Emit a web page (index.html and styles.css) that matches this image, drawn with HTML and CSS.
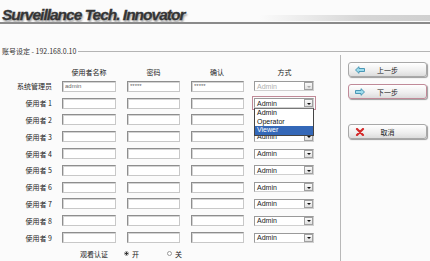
FILE: index.html
```html
<!DOCTYPE html>
<html>
<head>
<meta charset="utf-8">
<link rel="stylesheet" href="styles.css">
</head>
<body>
<div class="header">
  <span class="brand">Surveillance Tech. Innovator</span>
  <div class="shade"></div>
</div>
<div class="title-row">
  <span class="title">账号设定 - 192.168.0.10</span>
  <span class="title-line"></span>
</div>
<div class="main">
  <div class="left">
    <div class="grid">
      <div class="cell"></div>
      <div class="cell head">使用者名称</div>
      <div class="cell head">密码</div>
      <div class="cell head">确认</div>
      <div class="cell head sel-head">方式</div>

      <div class="cell label">系统管理员</div>
      <div class="cell"><input class="inp" value="admin"></div>
      <div class="cell"><input class="inp pw" value="*****"></div>
      <div class="cell"><input class="inp pw" value="*****"></div>
      <div class="cell"><div class="sel disabled"><span>Admin</span><i class="arr"></i></div></div>

      <div class="cell label">使用者 1</div>
      <div class="cell"><input class="inp"></div>
      <div class="cell"><input class="inp"></div>
      <div class="cell"><input class="inp"></div>
      <div class="cell"><div class="sel-wrap"><div class="sel focus"><span>Admin</span><i class="arr"></i></div>
        <ul class="drop"><li>Admin</li><li>Operator</li><li class="hl">Viewer</li></ul></div></div>

      <div class="cell label">使用者 2</div>
      <div class="cell"><input class="inp"></div>
      <div class="cell"><input class="inp"></div>
      <div class="cell"><input class="inp"></div>
      <div class="cell"><div class="sel covered"><span>Admin</span><i class="arr"></i></div></div>

      <div class="cell label">使用者 3</div>
      <div class="cell"><input class="inp"></div>
      <div class="cell"><input class="inp"></div>
      <div class="cell"><input class="inp"></div>
      <div class="cell"><div class="sel"><span>Admin</span><i class="arr"></i></div></div>

      <div class="cell label">使用者 4</div>
      <div class="cell"><input class="inp"></div>
      <div class="cell"><input class="inp"></div>
      <div class="cell"><input class="inp"></div>
      <div class="cell"><div class="sel"><span>Admin</span><i class="arr"></i></div></div>

      <div class="cell label">使用者 5</div>
      <div class="cell"><input class="inp"></div>
      <div class="cell"><input class="inp"></div>
      <div class="cell"><input class="inp"></div>
      <div class="cell"><div class="sel"><span>Admin</span><i class="arr"></i></div></div>

      <div class="cell label">使用者 6</div>
      <div class="cell"><input class="inp"></div>
      <div class="cell"><input class="inp"></div>
      <div class="cell"><input class="inp"></div>
      <div class="cell"><div class="sel"><span>Admin</span><i class="arr"></i></div></div>

      <div class="cell label">使用者 7</div>
      <div class="cell"><input class="inp"></div>
      <div class="cell"><input class="inp"></div>
      <div class="cell"><input class="inp"></div>
      <div class="cell"><div class="sel"><span>Admin</span><i class="arr"></i></div></div>

      <div class="cell label">使用者 8</div>
      <div class="cell"><input class="inp"></div>
      <div class="cell"><input class="inp"></div>
      <div class="cell"><input class="inp"></div>
      <div class="cell"><div class="sel"><span>Admin</span><i class="arr"></i></div></div>

      <div class="cell label">使用者 9</div>
      <div class="cell"><input class="inp"></div>
      <div class="cell"><input class="inp"></div>
      <div class="cell"><input class="inp"></div>
      <div class="cell"><div class="sel"><span>Admin</span><i class="arr"></i></div></div>
    </div>
    <div class="auth">
      <span class="auth-label">观看认证</span>
      <span class="radio on"></span><span class="opt">开</span>
      <span class="radio off"></span><span class="opt">关</span>
    </div>
  </div>
  <div class="right">
    <div class="btn">
      <svg class="ico" width="10" height="8" viewBox="0 0 10 8"><polygon points="0.5,4 4,0.7 4,2.5 9.5,2.5 9.5,5.5 4,5.5 4,7.3" fill="#9fdcec" stroke="#3d8fb0" stroke-width="0.9"/></svg>
      <span class="btn-text">上一步</span>
    </div>
    <div class="btn active">
      <svg class="ico" width="10" height="8" viewBox="0 0 10 8"><polygon points="9.5,4 6,0.7 6,2.5 0.5,2.5 0.5,5.5 6,5.5 6,7.3" fill="#9fdcec" stroke="#3d8fb0" stroke-width="0.9"/></svg>
      <span class="btn-text">下一步</span>
    </div>
    <div class="btn cancel">
      <svg class="ico" width="10" height="8" viewBox="0 0 10 8"><path d="M2,1 L8,7 M8,1 L2,7" stroke="#d42a2a" stroke-width="2.2" stroke-linecap="round"/></svg>
      <span class="btn-text">取消</span>
    </div>
  </div>
</div>
</body>
</html>
```

FILE: styles.css
```css
* { box-sizing: border-box; }
html, body {
  margin: 0;
  padding: 0;
  width: 430px;
  height: 261px;
  overflow: hidden;
  background: #fbfbfb;
  font-family: "Noto Sans CJK SC", "Liberation Sans", sans-serif;
  color: #333;
}
.header {
  position: relative;
  height: 24px;
  border-bottom: 2px solid #8a8a8a;
  padding: 1px 0 0 2px;
}
.brand {
  position: relative;
  z-index: 1;
  font-family: "Liberation Sans", Arial, sans-serif;
  font-weight: bold;
  font-style: italic;
  font-size: 15.5px;
  letter-spacing: -1px;
  line-height: 18px;
  color: #353535;
  -webkit-text-stroke: 0.3px #353535;
  text-shadow: 1px 2px 2px #9a9a9a;
}
.shade {
  position: absolute;
  right: 0;
  bottom: 1px;
  width: 170px;
  height: 6px;
  background: linear-gradient(to right, rgba(200,200,200,0), #d6d6d6 60%, #d0d0d0);
}
.title-row {
  display: flex;
  align-items: center;
  margin-top: 23px;
  height: 8px;
  padding-left: 2px;
}
.title {
  font-size: 7px;
  line-height: 8px;
  color: #333;
  white-space: nowrap;
}
.title-line {
  flex: 1;
  height: 1px;
  margin-left: 2px;
  background: #b4b4b4;
}
.main {
  display: flex;
  height: 206px;
}
.left {
  width: 341px;
  border-right: 1px solid #b8b8b8;
  padding-top: 11px;
}
.grid {
  display: grid;
  grid-template-columns: 62px 65px 64px 63px 61px;
  grid-template-rows: 12px repeat(10, 16.8px);
}
.cell {
  display: flex;
  align-items: center;
}
.head {
  justify-content: center;
  padding-right: 11px;
  font-size: 7px;
  color: #222;
}
.sel-head { padding-right: 0; }
.label {
  justify-content: flex-end;
  padding-right: 10px;
  font-size: 7px;
  color: #222;
}
.inp {
  width: 54px;
  height: 11px;
  margin: 0;
  padding: 0 2px;
  border: 1px solid #c8c8c8;
  border-top-color: #8e8e8e;
  border-left-color: #8e8e8e;
  box-shadow: inset 1px 1px 0 #d4d4d4;
  background: #fff;
  font-family: "Liberation Sans", sans-serif;
  font-size: 6px;
  color: #666;
  outline: none;
}
.grid .cell:nth-child(5n+3) .inp,
.grid .cell:nth-child(5n+4) .inp { width: 53px; }
.sel-wrap {
  position: relative;
  width: 60px;
}
.sel {
  display: flex;
  align-items: center;
  justify-content: space-between;
  width: 60px;
  height: 10px;
  border: 1px solid #9a9a9a;
  border-right-color: #d0d0d0;
  border-bottom-color: #d0d0d0;
  background: #fff;
  padding-left: 2px;
  font-family: "Liberation Sans", sans-serif;
  font-size: 7px;
  color: #222;
}
.sel.covered { visibility: hidden; }
.sel.disabled { color: #b0b0b0; }
.sel.disabled .arr::after { border-top-color: #aaa; }
.sel.focus {
  outline: 1px solid #c08a98;
  outline-offset: 1px;
}
.arr {
  position: relative;
  width: 9px;
  height: 8px;
  border: 1px solid #a0a0a0;
  background: linear-gradient(#fafafa, #e0e0e0);
}
.arr::after {
  content: "";
  position: absolute;
  left: 2px;
  top: 2.5px;
  border-left: 2px solid transparent;
  border-right: 2px solid transparent;
  border-top: 2px solid #111;
}
.drop {
  position: absolute;
  z-index: 5;
  left: 0;
  top: 10px;
  width: 60px;
  margin: 0;
  padding: 0;
  list-style: none;
  background: #fff;
  border: 1px solid #444;
  border-top-color: #777;
  font-family: "Liberation Sans", sans-serif;
  font-size: 7px;
  line-height: 8.6px;
  color: #111;
}
.drop li { padding-left: 2px; }
.drop li.hl { background: #3468b8; color: #fff; }
.auth {
  display: flex;
  align-items: center;
  height: 16px;
  padding-left: 80px;
  font-size: 7px;
  color: #222;
}
.auth-label { margin-right: 16px; }
.radio {
  width: 5px;
  height: 5px;
  border-radius: 50%;
  border: 1px solid #9a9a9a;
  background: #fff;
  margin-right: 3px;
}
.radio.on { background: radial-gradient(circle, #333 0 1px, #fff 1.2px); }
.opt { margin-right: 28px; }
.right {
  padding: 7px 0 0 7px;
}
.btn {
  position: relative;
  display: flex;
  align-items: center;
  width: 79px;
  height: 15px;
  margin-bottom: 7px;
  border: 1px solid #a8a8a8;
  border-radius: 3px;
  background: linear-gradient(#ffffff, #eeeeee 60%, #dcdcdc);
  box-shadow: 1px 1px 1px #9c9c9c;
}
.btn.active { border-color: #c08a98; }
.btn.cancel { margin-top: 25px; }
.ico { margin-left: 6px; }
.btn-text {
  position: absolute;
  left: 0;
  right: 0;
  text-align: center;
  font-size: 7px;
  color: #222;
  pointer-events: none;
}
```
